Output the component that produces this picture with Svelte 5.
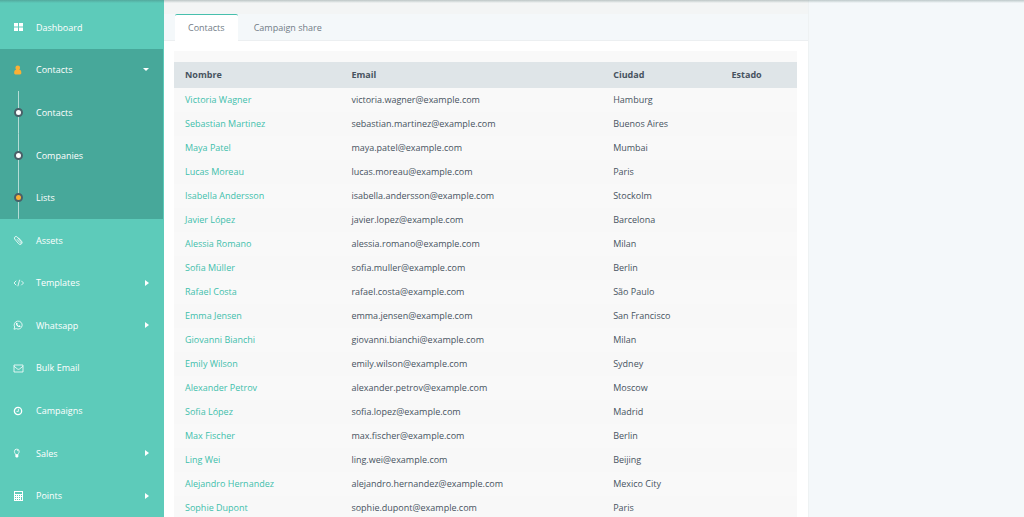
<script lang="ts">
  interface MenuItem {
    label: string;
    icon: string;
    children?: { label: string; current?: boolean }[];
    expandable?: boolean;
  }

  const menu: MenuItem[] = [
    { label: "Dashboard", icon: "dashboard" },
    {
      label: "Contacts",
      icon: "user",
      children: [
        { label: "Contacts" },
        { label: "Companies" },
        { label: "Lists", current: true },
      ],
    },
    { label: "Assets", icon: "clip" },
    { label: "Templates", icon: "code", expandable: true },
    { label: "Whatsapp", icon: "whatsapp", expandable: true },
    { label: "Bulk Email", icon: "mail" },
    { label: "Campaigns", icon: "clock" },
    { label: "Sales", icon: "bulb", expandable: true },
    { label: "Points", icon: "calculator", expandable: true },
  ];

  const tabs = ["Contacts", "Campaign share"];
  let activeTab = $state("Contacts");

  const contacts = [
    { name: "Victoria Wagner", email: "victoria.wagner@example.com", city: "Hamburg" },
    { name: "Sebastian Martinez", email: "sebastian.martinez@example.com", city: "Buenos Aires" },
    { name: "Maya Patel", email: "maya.patel@example.com", city: "Mumbai" },
    { name: "Lucas Moreau", email: "lucas.moreau@example.com", city: "Paris" },
    { name: "Isabella Andersson", email: "isabella.andersson@example.com", city: "Stockolm" },
    { name: "Javier López", email: "javier.lopez@example.com", city: "Barcelona" },
    { name: "Alessia Romano", email: "alessia.romano@example.com", city: "Milan" },
    { name: "Sofia Müller", email: "sofia.muller@example.com", city: "Berlin" },
    { name: "Rafael Costa", email: "rafael.costa@example.com", city: "São Paulo" },
    { name: "Emma Jensen", email: "emma.jensen@example.com", city: "San Francisco" },
    { name: "Giovanni Bianchi", email: "giovanni.bianchi@example.com", city: "Milan" },
    { name: "Emily Wilson", email: "emily.wilson@example.com", city: "Sydney" },
    { name: "Alexander Petrov", email: "alexander.petrov@example.com", city: "Moscow" },
    { name: "Sofia López", email: "sofia.lopez@example.com", city: "Madrid" },
    { name: "Max Fischer", email: "max.fischer@example.com", city: "Berlin" },
    { name: "Ling Wei", email: "ling.wei@example.com", city: "Beijing" },
    { name: "Alejandro Hernandez", email: "alejandro.hernandez@example.com", city: "Mexico City" },
    { name: "Sophie Dupont", email: "sophie.dupont@example.com", city: "Paris" },
  ];
</script>

{#snippet icon(name: string)}
  <svg class="icon" class:orange={name === "user"} viewBox="0 0 20 20" aria-hidden="true">
    {#if name === "dashboard"}
      <path d="M2 2h8v7H2zM12 2h8v7h-8zM2 11h8v7H2zM12 11h8v7h-8z" fill="currentColor" />
    {:else if name === "user"}
      <path
        d="M9.500 1a4.700 4.700 0 0 1 4.700 4.700c0 1.600-.7 3-1.600 4 2.800.2 4.100 2.400 4.100 6 0 2-1 3.300-2.700 3.300H5c-1.700 0-2.700-1.300-2.700-3.300 0-3.600 1.300-5.800 4.100-6-.9-1-1.600-2.400-1.600-4A4.700 4.700 0 0 1 9.500 1z"
        fill="currentColor"
      />
    {:else if name === "clip"}
      <path
        d="M8 8.500l6 7a1.500 1.500 0 0 0 2.300-2L8.500 4A3.300 3.300 0 0 0 3.300 8l8 9.500a3.800 3.800 0 0 0 6-4.800L11 5.500"
        class="line"
      />
    {:else if name === "code"}
      <path d="M6.500 5.500 2 10l4.500 4.500M16.500 5.500 21 10l-4.500 4.500M13.300 3.500l-3.600 13" class="line" />
    {:else if name === "whatsapp"}
      <path d="M2 18.500 3.300 14A8 8 0 1 1 6.500 17.200z" class="line" />
      <path
        d="M7.300 5.500h1.200l1 2.300-.9 1.300c.7 1.300 1.600 2.100 2.900 2.700l1.200-1.200 2.400 1.200c0 2-1.700 2.700-3.200 2.300-3-.8-5.300-3-6-5.400-.3-1.200.3-2.600 1.400-3.200z"
        fill="currentColor"
      />
    {:else if name === "mail"}
      <path d="M2 4h18v14H2zM2 6.500l7 5.500q2 1.300 4 0l7-5.500" class="line" />
    {:else if name === "clock"}
      <circle cx="10" cy="10" r="7.300" class="ring" />
      <path d="M10.800 5.500v5.300H7" class="line" />
    {:else if name === "bulb"}
      <path d="M5 13c0-2-2.200-3-2.200-6a4.800 4.800 0 0 1 9.600 0c0 3-2.200 4-2.200 6z" class="line" />
      <path d="M7.800 4.200c1.500 0 2.200.8 2.200 2.200" class="line" />
      <path d="M4.800 13.500h5.800v3.500l-1.500 1.800H6.200l-1.400-1.800z" fill="currentColor" />
    {:else if name === "calculator"}
      <path
        fill-rule="evenodd"
        d="M2 0h18v20H2zM4 2v4h14V2zM4 8v2h2V8zM8 8v2h2V8zM12 8v2h2V8zM16 8v2h2V8zM4 12v2h2v-2zM8 12v2h2v-2zM12 12v2h2v-2zM16 12v6h2v-6zM4 16v2h2v-2zM8 16v2h2v-2zM12 16v2h2v-2z"
        fill="currentColor"
      />
    {/if}
  </svg>
{/snippet}

<div class="layout">
  <nav class="sidebar">
    {#each menu as item}
      {#if item.children}
        <a class="item open" href="#contacts">
          {@render icon(item.icon)}
          <span class="label">{item.label}</span>
          <span class="caret down"></span>
        </a>
        <div class="submenu">
          {#each item.children as child}
            <a class="subitem" href="#{child.label.toLowerCase()}">
              <span class="track"><span class="dot" class:current={child.current}></span></span>
              <span class="label">{child.label}</span>
            </a>
          {/each}
        </div>
      {:else}
        <a class="item" href="#{item.label.toLowerCase()}">
          {@render icon(item.icon)}
          <span class="label">{item.label}</span>
          {#if item.expandable}
            <span class="caret"></span>
          {/if}
        </a>
      {/if}
    {/each}
  </nav>

  <main class="content">
    <div class="tabs" role="tablist">
      {#each tabs as tab}
        <button
          class="tab"
          class:active={activeTab === tab}
          role="tab"
          aria-selected={activeTab === tab}
          onclick={() => (activeTab = tab)}>{tab}</button
        >
      {/each}
    </div>

    <div class="panel">
      <div class="table-wrap">
        <table>
          <thead>
            <tr>
              <th class="name">Nombre</th>
              <th class="email">Email</th>
              <th class="city">Ciudad</th>
              <th>Estado</th>
            </tr>
          </thead>
          <tbody>
            {#each contacts as contact}
              <tr>
                <td><a href="#contact">{contact.name}</a></td>
                <td>{contact.email}</td>
                <td>{contact.city}</td>
                <td></td>
              </tr>
            {/each}
          </tbody>
        </table>
      </div>
    </div>
  </main>

  <aside class="aside"></aside>
</div>

<div class="topshade"></div>

<style>
  :global(body) {
    margin: 0;
  }

  .layout {
    display: flex;
    height: 100vh;
    overflow: hidden;
    background-color: #f4f8fa;
    color: #47535f;
    font-family: "Open Sans", "Noto Sans", sans-serif;
    font-size: 9px;
    line-height: 14px;
  }

  a {
    text-decoration: none;
  }

  .sidebar {
    display: flex;
    flex-direction: column;
    box-sizing: border-box;
    width: 164px;
    flex-shrink: 0;
    padding-top: 6px;
    background-color: #5dcbba;
    border-right: 1px solid #5dcbba;
  }

  .item,
  .subitem {
    display: flex;
    align-items: center;
    flex: 1;
    color: #fff;
  }

  .item {
    padding: 0 13px;
  }

  .open,
  .submenu {
    background-color: #47a89a;
  }

  .submenu {
    display: flex;
    flex-direction: column;
    flex: 3;
  }

  .icon {
    width: 10px;
    height: 10px;
    margin-right: 13px;
    overflow: visible;
  }

  .orange {
    color: #fbb034;
  }

  .line,
  .ring {
    fill: none;
    stroke: currentColor;
    stroke-width: 1.6;
  }

  .ring {
    stroke-width: 2.6;
  }

  .label {
    flex: 1;
    padding-top: 1px;
  }

  .caret {
    width: 0;
    height: 0;
    margin-right: 1px;
    border: 3px solid transparent;
    border-left: 4px solid #fff;
    border-right: 0;
  }

  .caret.down {
    border: 3px solid transparent;
    border-top: 3px solid #fff;
    border-bottom: 0;
  }

  .track {
    display: flex;
    align-items: center;
    justify-content: center;
    align-self: stretch;
    width: 35px;
    margin-left: 1px;
    background: linear-gradient(#b5dcd6, #b5dcd6) center / 1px 100% no-repeat;
  }

  .dot {
    width: 5px;
    height: 5px;
    border: 2px solid #4a6068;
    border-radius: 50%;
    background-color: #fff;
  }

  .dot.current {
    background-color: #fbb034;
  }

  .content {
    flex: 3;
    min-width: 0;
    background-color: #fff;
  }

  .aside {
    flex: 1;
    border-left: 1px solid #eef2f3;
  }

  .tabs {
    display: flex;
    gap: 3px;
    padding: 14px 11px 0;
    background: linear-gradient(#f3f5f5 14px, #f4f8fa 14px);
    border-bottom: 1px solid #eceff1;
  }

  .tab {
    margin: 0 0 -1px;
    padding: 6px 13px 6px;
    border: 0;
    border-top: 1px solid transparent;
    border-radius: 2px 2px 0 0;
    background: none;
    color: #727c87;
    font: inherit;
  }

  .tab.active {
    border-top-color: #47bfad;
    background-color: #fff;
  }

  .panel {
    padding: 10px 11px 0 10px;
  }

  .table-wrap {
    padding-top: 11px;
    background-color: #f9f9f9;
  }

  table {
    width: 100%;
    table-layout: fixed;
    border-collapse: collapse;
  }

  th,
  td {
    box-sizing: border-box;
    padding: 5px 11px;
    text-align: left;
  }

  th {
    padding: 6px 11px;
    background-color: #dfe5e8;
    font-weight: bold;
  }

  .name {
    width: 26.7%;
  }

  .email {
    width: 42%;
  }

  .city {
    width: 19%;
  }

  td {
    background-color: #f9f9f9;
  }

  tr:nth-child(even) td {
    background-color: #f8f8f8;
  }

  td a {
    color: #3fbfac;
  }

  .topshade {
    position: fixed;
    top: 0;
    left: 0;
    right: 0;
    height: 3px;
    background: linear-gradient(rgba(60, 90, 90, 0.3), rgba(60, 90, 90, 0));
  }
</style>
